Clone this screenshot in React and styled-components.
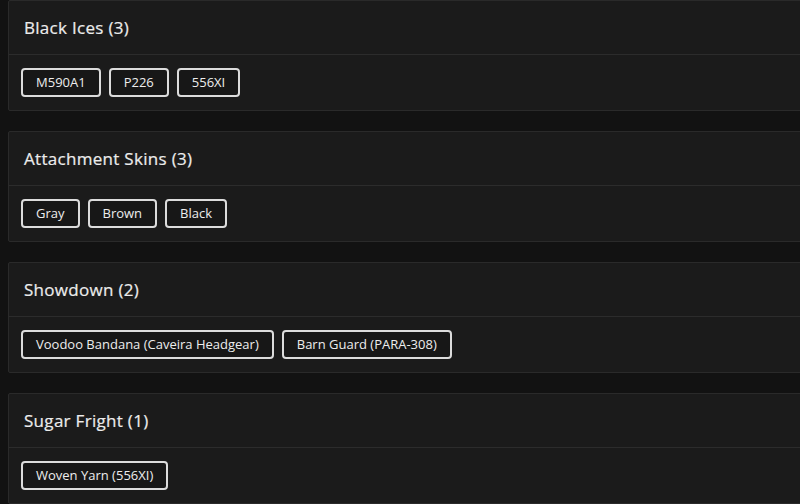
import React from "react";
import styled, { createGlobalStyle } from "styled-components";

const GlobalStyle = createGlobalStyle`
  html, body {
    margin: 0;
    padding: 0;
    background: #121212;
    overflow: hidden;
  }
  body {
    font-family: "Open Sans", "Liberation Sans", sans-serif;
  }
`;

const StyledPage = styled.main`
  width: 100%;
  display: flex;
  flex-direction: column;
  gap: 20px;
  padding: 0 0 0 8px;
  box-sizing: border-box;
`;

const StyledCard = styled.section`
  width: 830px;
  background: #1b1b1b;
  border: 1px solid #2a2a2a;
  border-radius: 2px;
  box-sizing: border-box;
`;

const StyledCardHeader = styled.header`
  height: 54px;
  display: flex;
  align-items: center;
  padding: 0 15px;
  border-bottom: 1px solid #2c2c2c;
  box-sizing: border-box;
`;

const StyledCardTitle = styled.h2`
  margin: 0;
  font-size: 17px;
  font-weight: 500;
  color: #ececec;
  letter-spacing: 0.3px;
  -webkit-text-stroke: 0.2px #ececec;
`;

const StyledCardBody = styled.div`
  display: flex;
  flex-wrap: wrap;
  gap: 8px;
  padding: 13px 12px 12px;
  min-height: 55px;
  box-sizing: border-box;
`;

const StyledTag = styled.button`
  height: 29px;
  padding: 0 13px;
  border: 2px solid #dcdcdc;
  border-radius: 4px;
  background: #171717;
  color: #ededed;
  font-family: "Open Sans", "Liberation Sans", sans-serif;
  font-size: 13px;
  line-height: 25px;
  cursor: pointer;
  box-sizing: border-box;
`;

const groups = [
  { title: "Black Ices", items: ["M590A1", "P226", "556XI"] },
  { title: "Attachment Skins", items: ["Gray", "Brown", "Black"] },
  { title: "Showdown", items: ["Voodoo Bandana (Caveira Headgear)", "Barn Guard (PARA-308)"] },
  { title: "Sugar Fright", items: ["Woven Yarn (556XI)"] },
];

const App = () => {
  return (
    <>
      <GlobalStyle />
      <StyledPage>
        {groups.map((group) => (
          <StyledCard key={group.title}>
            <StyledCardHeader>
              <StyledCardTitle>
                {group.title} ({group.items.length})
              </StyledCardTitle>
            </StyledCardHeader>
            <StyledCardBody>
              {group.items.map((item) => (
                <StyledTag key={item}>{item}</StyledTag>
              ))}
            </StyledCardBody>
          </StyledCard>
        ))}
      </StyledPage>
    </>
  );
};

export default App;
